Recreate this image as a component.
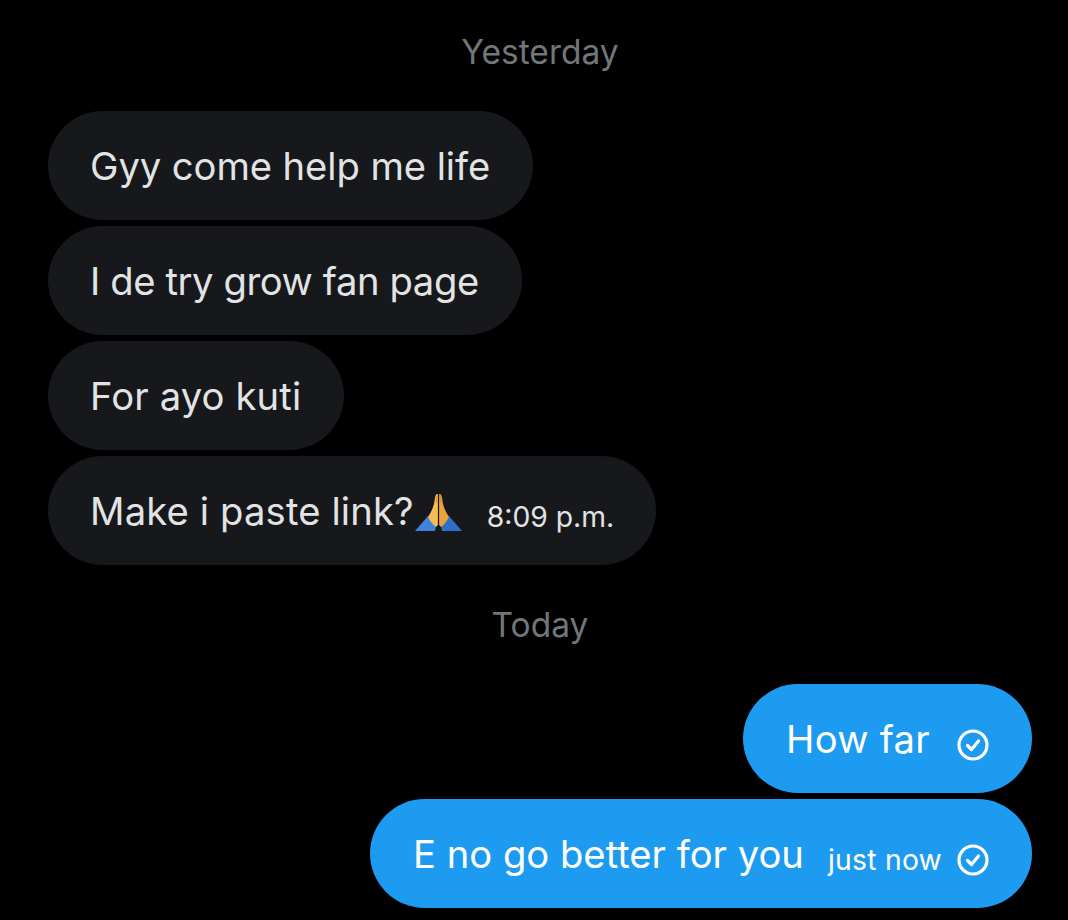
<main class="chat">
  <div class="day first">Yesterday</div>
  <div class="bubble in first-line">Gyy come help me life</div>
  <div class="bubble in tight">I de try grow fan page</div>
  <div class="bubble in loose">For ayo kuti</div>
  <div class="bubble in last">
    <span class="link">Make i paste link?</span>
    <svg class="pray" viewBox="0 0 47 38" aria-hidden="true">
      <path d="M0 38 L13 23 L21 33 L20 38 Z" fill="#3f83dc"/>
      <path d="M47 38 L34 23 L26 33 L27 38 Z" fill="#2f6fc9"/>
      <path d="M22.9 1 C20.6 1 20.2 3 19.8 6 C19.2 12 17.5 17 13 24 C15 28 18 32 21 34 L22.9 32 Z" fill="#f6bd55"/>
      <path d="M24.1 1 C26.4 1 26.8 3 27.2 6 C27.8 12 29.5 17 34 24 C32 28 29 32 26 34 L24.1 32 Z" fill="#e9a338"/>
      <path d="M21.5 3 V10 M25.5 3 V10" stroke="#c98a2c" stroke-width="0.8" fill="none"/>
    </svg>
    <span class="time">8:09 p.m.</span>
  </div>
  <div class="day today">Today</div>
  <div class="bubble out">
    <span class="far">How far</span>
    <svg class="tick" viewBox="0 0 32 32" aria-hidden="true"><circle cx="16" cy="16" r="14"/><path d="M10.5 16.5 L14.5 20.5 L21.5 12"/></svg>
  </div>
  <div class="bubble out">
    <span>E no go better for you</span>
    <span class="time now">just now</span>
    <svg class="tick" viewBox="0 0 32 32" aria-hidden="true"><circle cx="16" cy="16" r="14"/><path d="M10.5 16.5 L14.5 20.5 L21.5 12"/></svg>
  </div>
</main>

<style>
  :global(body) { margin: 0; background: #000; }
  .chat {
    width: 1068px; height: 920px; box-sizing: border-box; background: #000;
    display: flex; flex-direction: column; padding: 0 36px 0 48px; overflow: hidden;
    font-family: Inter, "Noto Sans", sans-serif;
  }
  .day { align-self: center; color: #71767b; font-size: 33.5px; line-height: 40px; }
  .first { margin-top: 32px; margin-bottom: 39px; }
  .today { margin-top: 40px; margin-bottom: 39px; }
  .bubble {
    height: 109px; box-sizing: border-box; border-radius: 54.5px; padding: 0 43px 0 42px;
    display: flex; align-items: center; font-size: 38.2px; margin-bottom: 6px; white-space: nowrap;
  }
  .in { align-self: flex-start; background: #16181b; color: #e1e3e4; }
  .out { align-self: flex-end; background: #1d9bf0; color: #fff; padding-left: 43px; }
  .first-line { letter-spacing: -0.08px; }
  .tight { letter-spacing: -0.4px; }
  .loose { letter-spacing: 0.15px; }
  .link { letter-spacing: 0.15px; }
  .far { letter-spacing: 0.3px; }
  .last { margin-bottom: 0; padding-right: 42px; }
  .time { font-size: 28.3px; margin-top: 13px; }
  .pray { width: 47px; height: 38px; margin-top: 3px; margin-left: 1px; margin-right: 25px; }
  .now { margin-left: 24px; margin-right: 15px; letter-spacing: 0.25px; }
  .tick { width: 32px; height: 32px; margin-left: 27px; margin-top: 13px; fill: none; stroke: #fff; stroke-width: 3.2; stroke-linecap: round; stroke-linejoin: round; }
  .now + .tick { margin-left: 0; }
</style>
